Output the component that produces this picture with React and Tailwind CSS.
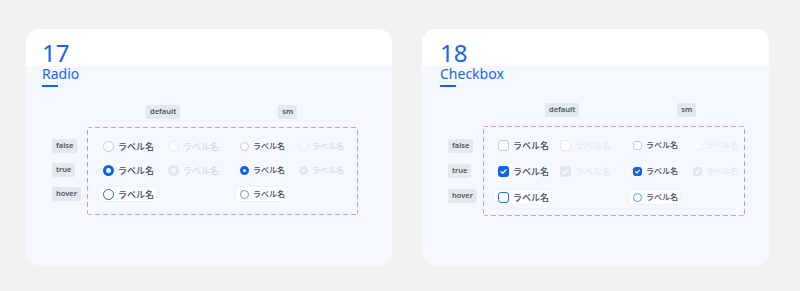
import React from 'react';

const JP = { fontFamily: '"Noto Sans", "Noto Sans CJK JP", sans-serif' };

const Chip = ({ children }) => (
  <span className="inline-flex items-center h-[14px] px-[4px] rounded-[2px] bg-[#e5e8ec] text-[7.5px] font-semibold text-[#4b5563] leading-none">
    {children}
  </span>
);

const Radio = ({ sm, checked, disabled, hover }) => {
  const size = sm ? 'w-[9px] h-[9px]' : 'w-[11px] h-[11px]';
  let look = 'border border-[#c6cbd2] bg-white';
  if (checked && !disabled) look = sm ? 'border-[3px] border-[#0b63e6] bg-white' : 'border-[3.5px] border-[#0b63e6] bg-white';
  if (checked && disabled) look = 'border-[3px] border-[#e3e6ea] bg-[#f7f8fa]';
  if (!checked && disabled) look = 'border border-[#e8ebef] bg-[#fbfcfd]';
  if (hover) look = sm ? 'border border-[#5b9bf2] bg-white' : 'border-[1.5px] border-[#1a6cf0] bg-white';
  return <span className={`${size} ${look} rounded-full shrink-0 box-border`} />;
};

const Check = () => (
  <svg viewBox="0 0 12 12" className="w-full h-full" fill="none">
    <path d="M3.3 6.2l1.8 1.8 3.6-3.8" stroke="white" strokeWidth="1.5" strokeLinecap="round" strokeLinejoin="round" />
  </svg>
);

const Checkbox = ({ sm, checked, disabled, hover }) => {
  const size = sm ? 'w-[9px] h-[9px] rounded-[3px]' : 'w-[11px] h-[11px] rounded-[3px]';
  let look = 'border border-[#c6cbd2] bg-white';
  if (checked && !disabled) look = 'bg-[#0b63e6]';
  if (checked && disabled) look = 'bg-[#e3e6ea]';
  if (!checked && disabled) look = sm ? 'border border-[#eceef1] bg-white rounded-full' : 'border border-[#e6e8ec] bg-white shadow-[0_1px_1px_rgba(0,0,0,0.04)]';
  if (hover) look = sm ? 'border border-[#5b9bf2] bg-white rounded-full' : 'border-[1.5px] border-[#1a6cf0] bg-white';
  return (
    <span className={`${size} ${look} shrink-0 box-border flex items-center justify-center`}>
      {checked && <Check />}
    </span>
  );
};

const Item = ({ kind, sm, checked, disabled, hover }) => {
  const Ctl = kind === 'radio' ? Radio : Checkbox;
  const text = disabled
    ? kind === 'radio' ? 'text-[#d6dae0]' : 'text-[#e6e9ed]'
    : 'text-[#454d5a]';
  return (
    <div
      className={`inline-flex items-center h-[16px] pl-[4px] pr-[2px] rounded-[3px] border ${
        hover ? 'bg-[#fdfeff] border-[#eef2f8]' : 'border-transparent'
      }`}
    >
      <Ctl sm={sm} checked={checked} disabled={disabled} hover={hover} />
      <span className={`ml-[4px] font-medium leading-none ${sm ? 'text-[8px]' : 'text-[9px]'} ${text}`} style={JP}>
        ラベル名
      </span>
    </div>
  );
};

const rows = [
  { label: 'false', checked: false },
  { label: 'true', checked: true },
  { label: 'hover', checked: false, hover: true },
];

// dashed outline with longer dashes than the browser's own dashed border
const dashed =
  '[background:linear-gradient(90deg,#c49cf6_62%,transparent_0)_top_left/8px_1px_repeat-x,linear-gradient(90deg,#c49cf6_62%,transparent_0)_bottom_left/8px_1px_repeat-x,linear-gradient(0deg,#c49cf6_62%,transparent_0)_top_left/1px_8px_repeat-y,linear-gradient(0deg,#c49cf6_62%,transparent_0)_top_right/1px_8px_repeat-y]';

const Panel = ({ num, title, kind, cfg }) => (
  <div className={`${cfg.w} h-[237px] rounded-[14px] overflow-hidden bg-[#f5f9ff] flex flex-col shrink-0`} style={JP}>
    <div className={`h-[37px] bg-white flex items-end pb-[1px] ${cfg.pl}`}>
      <span className="text-[24px] leading-[24px] font-normal text-[#1466f0]">{num}</span>
    </div>
    <div className={cfg.pl}>
      <div className="pt-[1px] text-[14px] leading-[14px] text-[#1466f0]">{title}</div>
      <div className="mt-[4px] w-[16px] h-[2px] bg-[#1466f0]" />
    </div>
    <div className={`flex ${cfg.chipsMt} pl-[26px]`}>
      <div className={`flex ${cfg.defChip}`}><Chip>default</Chip></div>
      <div className={`flex ${cfg.smChip}`}><Chip>sm</Chip></div>
    </div>
    <div className={`flex ${cfg.boxMt} pl-[26px]`}>
      <div className={`w-[35px] shrink-0 flex flex-col items-start ${cfg.labelGap} ${cfg.labelPt}`}>
        {rows.map((r) => (
          <Chip key={r.label}>{r.label}</Chip>
        ))}
      </div>
      <div className={`${cfg.boxW} ${cfg.boxH} ${dashed} rounded-[3px] ${cfg.boxPl} pt-[11px] flex flex-col ${cfg.rowGap}`}>
        {rows.map((r) => (
          <div key={r.label} className="flex items-center h-[16px]">
            <div className={`${cfg.colW} shrink-0 flex items-center`}>
              <div className={`${cfg.item2} shrink-0 flex`}>
                <Item kind={kind} checked={r.checked} hover={r.hover} />
              </div>
              {!r.hover && <Item kind={kind} checked={r.checked} disabled />}
            </div>
            <div className="flex items-center">
              <div className={`${cfg.smItem2} shrink-0 flex`}>
                <Item kind={kind} sm checked={r.checked} hover={r.hover} />
              </div>
              {!r.hover && <Item kind={kind} sm checked={r.checked} disabled />}
            </div>
          </div>
        ))}
      </div>
    </div>
  </div>
);

export default function App() {
  return (
    <div className="w-[800px] h-[291px] bg-[#f2f2f2] flex gap-[30px] pt-[29px] pl-[26px]">
      <Panel
        num="17"
        title="Radio"
        kind="radio"
        cfg={{
          w: 'w-[366px]',
          pl: 'pl-[16px]',
          chipsMt: 'mt-[18px]',
          defChip: 'ml-[94px]',
          smChip: 'ml-[98px]',
          boxMt: 'mt-[8px]',
          labelGap: 'gap-[10px]',
          labelPt: 'pt-[12px]',
          boxW: 'w-[271px]',
          boxH: 'h-[88px]',
          boxPl: 'pl-[11px]',
          rowGap: 'gap-[8px]',
          colW: 'w-[137px]',
          item2: 'w-[65px]',
          smItem2: 'w-[59px]',
        }}
      />
      <Panel
        num="18"
        title="Checkbox"
        kind="checkbox"
        cfg={{
          w: 'w-[347px]',
          pl: 'pl-[18px]',
          chipsMt: 'mt-[16px]',
          defChip: 'ml-[97px]',
          smChip: 'ml-[98px]',
          boxMt: 'mt-[9px]',
          labelGap: 'gap-[11px]',
          labelPt: 'pt-[13px]',
          boxW: 'w-[262px]',
          boxH: 'h-[90px]',
          boxPl: 'pl-[10px]',
          rowGap: 'gap-[10px]',
          colW: 'w-[135px]',
          item2: 'w-[62px]',
          smItem2: 'w-[60px]',
        }}
      />
    </div>
  );
}
